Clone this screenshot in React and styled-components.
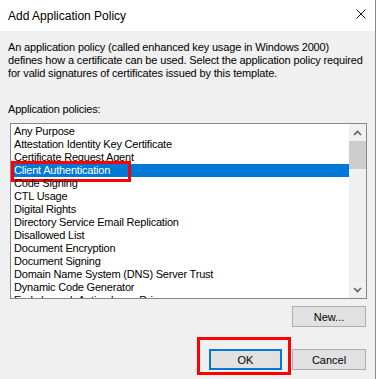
import styled, { createGlobalStyle } from "styled-components";

const GlobalStyle = createGlobalStyle`
  html, body {
    margin: 0;
    padding: 0;
    background: #ffffff;
  }
  body {
    font-family: "Liberation Sans", Arial, sans-serif;
    font-size: 11px;
    letter-spacing: -0.2px;
    color: #000000;
  }
`;

const policies = [
  "Any Purpose",
  "Attestation Identity Key Certificate",
  "Certificate Request Agent",
  "Client Authentication",
  "Code Signing",
  "CTL Usage",
  "Digital Rights",
  "Directory Service Email Replication",
  "Disallowed List",
  "Document Encryption",
  "Document Signing",
  "Domain Name System (DNS) Server Trust",
  "Dynamic Code Generator",
  "Early Launch Antimalware Driver",
];

function App() {
  const selected = 3;

  return (
    <>
      <GlobalStyle />
      <Dialog>
        <TitleBar>
          <Title>Add Application Policy</Title>
          <CloseButton>
            <svg width="10" height="10" viewBox="0 0 10 10">
              <path d="M0.5 0.5 L9.5 9.5 M9.5 0.5 L0.5 9.5" stroke="#111" strokeWidth="1" fill="none" />
            </svg>
          </CloseButton>
        </TitleBar>
        <Body>
          <Description>
            An application policy (called enhanced key usage in Windows 2000)
            <br />
            defines how a certificate can be used. Select the application policy required
            <br />
            for valid signatures of certificates issued by this template.
          </Description>
          <Label>Application policies:</Label>
          <ListBox>
            <Items>
              {policies.map((p, i) => (
                <Item key={p} $selected={i === selected}>
                  {p}
                  {i === selected && <ItemMark />}
                </Item>
              ))}
            </Items>
            <ScrollBar>
              <ArrowButton>
                <svg width="9" height="6" viewBox="0 0 9 6">
                  <path d="M1 5 L4.5 1.5 L8 5" stroke="#606060" strokeWidth="1.6" fill="none" />
                </svg>
              </ArrowButton>
              <Track>
                <Thumb />
              </Track>
              <ArrowButton>
                <svg width="9" height="6" viewBox="0 0 9 6">
                  <path d="M1 1 L4.5 4.5 L8 1" stroke="#606060" strokeWidth="1.6" fill="none" />
                </svg>
              </ArrowButton>
            </ScrollBar>
          </ListBox>
          <NewRow>
            <Button>New...</Button>
          </NewRow>
          <Footer>
            <Button $default>
              OK
              <ButtonMark />
            </Button>
            <Button>Cancel</Button>
          </Footer>
        </Body>
      </Dialog>
    </>
  );
}

const Dialog = styled.div`
  width: 375px;
  height: 379px;
  border-right: 1px solid #8a8a8a;
  display: flex;
  flex-direction: column;
  background: #f0f0f0;
`;

const TitleBar = styled.div`
  height: 31px;
  flex-shrink: 0;
  background: #ffffff;
  display: flex;
  align-items: center;
  justify-content: space-between;
  padding-left: 8px;
`;

const Title = styled.div`
  font-size: 12px;
  letter-spacing: 0;
`;

const CloseButton = styled.div`
  width: 28px;
  height: 31px;
  display: flex;
  align-items: center;
  justify-content: center;
  margin-top: -3px;
`;

const Body = styled.div`
  flex: 1;
  display: flex;
  flex-direction: column;
  padding: 10px 8px 0 8px;
`;

const Description = styled.p`
  margin: 0;
  line-height: 13px;
  letter-spacing: -0.15px;
  white-space: nowrap;
`;

const Label = styled.div`
  margin-top: 23px;
  line-height: 13px;
`;

const ListBox = styled.div`
  margin: 7px 0 0 2px;
  height: 174px;
  border: 1px solid #828790;
  background: #ffffff;
  display: flex;
`;

const Items = styled.div`
  flex: 1;
  padding-top: 1px;
  overflow: hidden;
`;

const Item = styled.div`
  position: relative;
  height: 13px;
  line-height: 13px;
  padding-left: 3px;
  white-space: nowrap;
  background: ${(p) => (p.$selected ? "#0078d7" : "transparent")};
  color: ${(p) => (p.$selected ? "#ffffff" : "#000000")};
`;

const ItemMark = styled.span`
  position: absolute;
  left: 0;
  top: -3px;
  width: 114px;
  height: 15px;
  border: 3px solid #ff0000;
  pointer-events: none;
`;

const ScrollBar = styled.div`
  width: 17px;
  background: #f0f0f0;
  display: flex;
  flex-direction: column;
`;

const ArrowButton = styled.div`
  height: 17px;
  display: flex;
  align-items: center;
  justify-content: center;
`;

const Track = styled.div`
  flex: 1;
`;

const Thumb = styled.div`
  height: 28px;
  background: #cdcdcd;
`;

const NewRow = styled.div`
  display: flex;
  justify-content: flex-end;
  margin-top: 7px;
  padding-right: 1px;
`;

const Footer = styled.div`
  display: flex;
  justify-content: flex-end;
  gap: 10px;
  margin-top: 22px;
  padding-right: 1px;
`;

const Button = styled.div`
  position: relative;
  box-sizing: border-box;
  width: ${(p) => (p.$default ? "73px" : "74px")};
  height: 21px;
  display: flex;
  align-items: center;
  justify-content: center;
  background: #e1e1e1;
  border: ${(p) => (p.$default ? "2px solid #0078d7" : "1px solid #adadad")};
  letter-spacing: 0;
`;

const ButtonMark = styled.span`
  position: absolute;
  left: -14px;
  top: -14px;
  width: 88px;
  height: 32px;
  border: 3px solid #ff0000;
  pointer-events: none;
`;

export default App;
